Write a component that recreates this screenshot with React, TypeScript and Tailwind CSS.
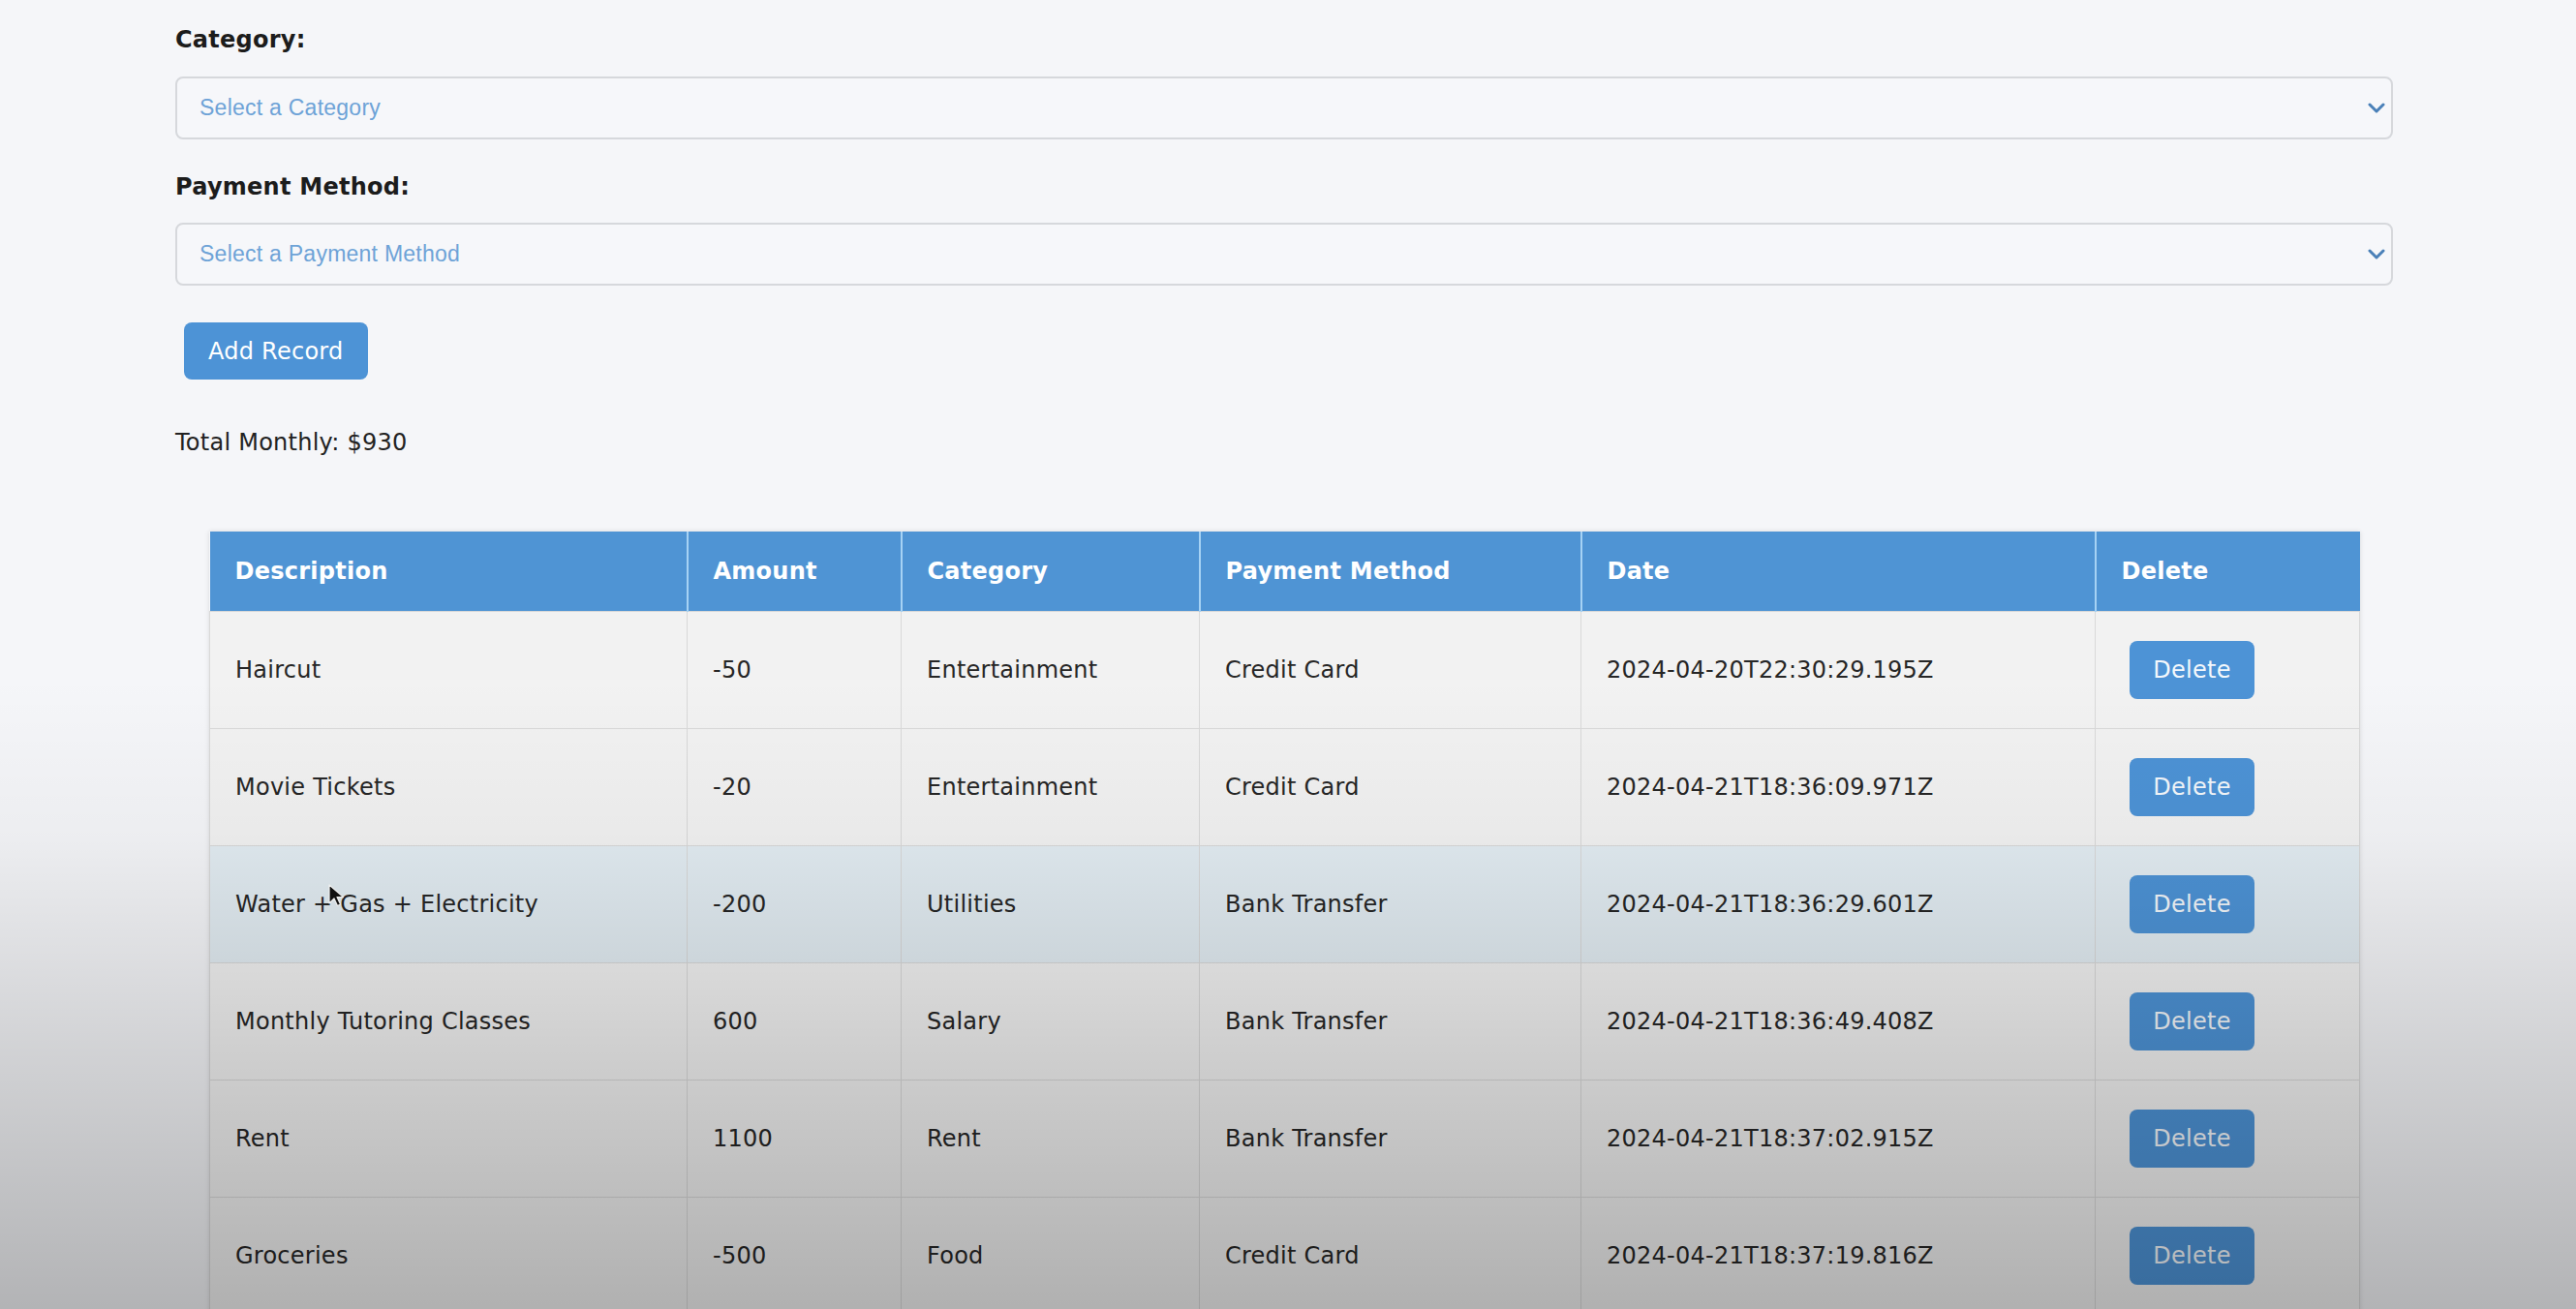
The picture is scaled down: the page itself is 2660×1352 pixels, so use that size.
import React from "react";

type Record = {
  description: string;
  amount: string;
  category: string;
  method: string;
  date: string;
  hover?: boolean;
};

const records: Record[] = [
  { description: "Haircut", amount: "-50", category: "Entertainment", method: "Credit Card", date: "2024-04-20T22:30:29.195Z" },
  { description: "Movie Tickets", amount: "-20", category: "Entertainment", method: "Credit Card", date: "2024-04-21T18:36:09.971Z" },
  { description: "Water + Gas + Electricity", amount: "-200", category: "Utilities", method: "Bank Transfer", date: "2024-04-21T18:36:29.601Z", hover: true },
  { description: "Monthly Tutoring Classes", amount: "600", category: "Salary", method: "Bank Transfer", date: "2024-04-21T18:36:49.408Z" },
  { description: "Rent", amount: "1100", category: "Rent", method: "Bank Transfer", date: "2024-04-21T18:37:02.915Z" },
  { description: "Groceries", amount: "-500", category: "Food", method: "Credit Card", date: "2024-04-21T18:37:19.816Z" },
];

const columns = [
  { label: "Description", width: "w-[493px]" },
  { label: "Amount", width: "w-[221px]" },
  { label: "Category", width: "w-[308px]" },
  { label: "Payment Method", width: "w-[394px]" },
  { label: "Date", width: "w-[531px]" },
  { label: "Delete", width: "w-[273px]" },
];

const Chevron: React.FC = () => (
  <svg width="18" height="11" viewBox="0 0 18 11" fill="none">
    <path d="M2 2l7 7 7-7" stroke="#4a80b8" strokeWidth="3" strokeLinecap="round" strokeLinejoin="round" />
  </svg>
);

const SelectBox: React.FC<{ placeholder: string }> = ({ placeholder }) => (
  <div className="flex h-[65px] items-center justify-between rounded-[8px] border-2 border-[#d6d8dc] bg-[#f6f7fa] pl-[23px] pr-[6px]">
    <span className="font-['Liberation_Sans',Arial,sans-serif] text-[23px] text-[#6ea3d7]">{placeholder}</span>
    <Chevron />
  </div>
);

const Label: React.FC<{ children: React.ReactNode; className?: string }> = ({ children, className }) => (
  <div className={`text-[24px] font-bold leading-[29px] text-[#1c1c1c] ${className ?? ""}`}>{children}</div>
);

const Cursor: React.FC = () => (
  <svg className="pointer-events-none absolute left-[339px] top-[913px]" width="16" height="24" viewBox="0 0 16 24">
    <path d="M1 1v19l5-5 3.5 7.5 3-1.4L9 13.6h6.5z" fill="#111" stroke="#fff" strokeWidth="1.2" strokeLinejoin="round" />
  </svg>
);

export default function App() {
  return (
    <div className="relative h-[1352px] overflow-hidden bg-[#f5f6f9] font-['DejaVu_Sans',Verdana,sans-serif] tracking-[0.25px]">
      <div className="ml-[181px] w-[2290px] pt-[27px]">
        <Label>Category:</Label>
        <div className="mt-[23px]">
          <SelectBox placeholder="Select a Category" />
        </div>
        <Label className="mt-[35px]">Payment Method:</Label>
        <div className="mt-[22px]">
          <SelectBox placeholder="Select a Payment Method" />
        </div>
        <button className="ml-[9px] mt-[38px] flex h-[59px] items-center rounded-[8px] bg-[#4d93d6] px-[25px] text-[24px] text-white">
          Add Record
        </button>
        <div className="mt-[51px] text-[24px] leading-[29px] text-[#222]">Total Monthly: $930</div>

        <table className="mx-[35px] mt-[77px] w-[2220px] table-fixed border-collapse shadow-[0_0_5px_rgba(0,0,0,0.12)]">
          <thead>
            <tr className="h-[82px] bg-[#4f94d4]">
              {columns.map((c) => (
                <th
                  key={c.label}
                  className={`${c.width} border-x-2 border-[#a6d2f4] pl-[26px] text-left text-[24px] font-bold text-white first:border-l-0 last:border-r-0`}
                >
                  {c.label}
                </th>
              ))}
            </tr>
          </thead>
          <tbody>
            {records.map((r) => (
              <tr key={r.date} className={`h-[121px] ${r.hover ? "bg-[#e3edf3]" : "bg-[#f2f2f2]"}`}>
                <td className="border border-[#d9d9d9] pl-[26px] text-[24px] text-[#262626]">{r.description}</td>
                <td className="border border-[#d9d9d9] pl-[26px] text-[24px] text-[#262626]">{r.amount}</td>
                <td className="border border-[#d9d9d9] pl-[26px] text-[24px] text-[#262626]">{r.category}</td>
                <td className="border border-[#d9d9d9] pl-[26px] text-[24px] text-[#262626]">{r.method}</td>
                <td className="border border-[#d9d9d9] pl-[26px] text-[24px] text-[#262626]">{r.date}</td>
                <td className="border border-[#d9d9d9] pl-[35px]">
                  <button className="flex h-[60px] w-[129px] items-center justify-center rounded-[8px] bg-[#4d93d6] text-[24px] text-[#f4f8fc]">
                    Delete
                  </button>
                </td>
              </tr>
            ))}
          </tbody>
        </table>
      </div>

      <Cursor />

      {/* video player shade at the bottom of the frame */}
      <div className="pointer-events-none absolute inset-x-0 bottom-0 top-[700px] bg-[linear-gradient(to_bottom,rgba(0,0,0,0)_0%,rgba(0,0,0,0.035)_25%,rgba(0,0,0,0.15)_60%,rgba(0,0,0,0.27)_100%)]" />
    </div>
  );
}
